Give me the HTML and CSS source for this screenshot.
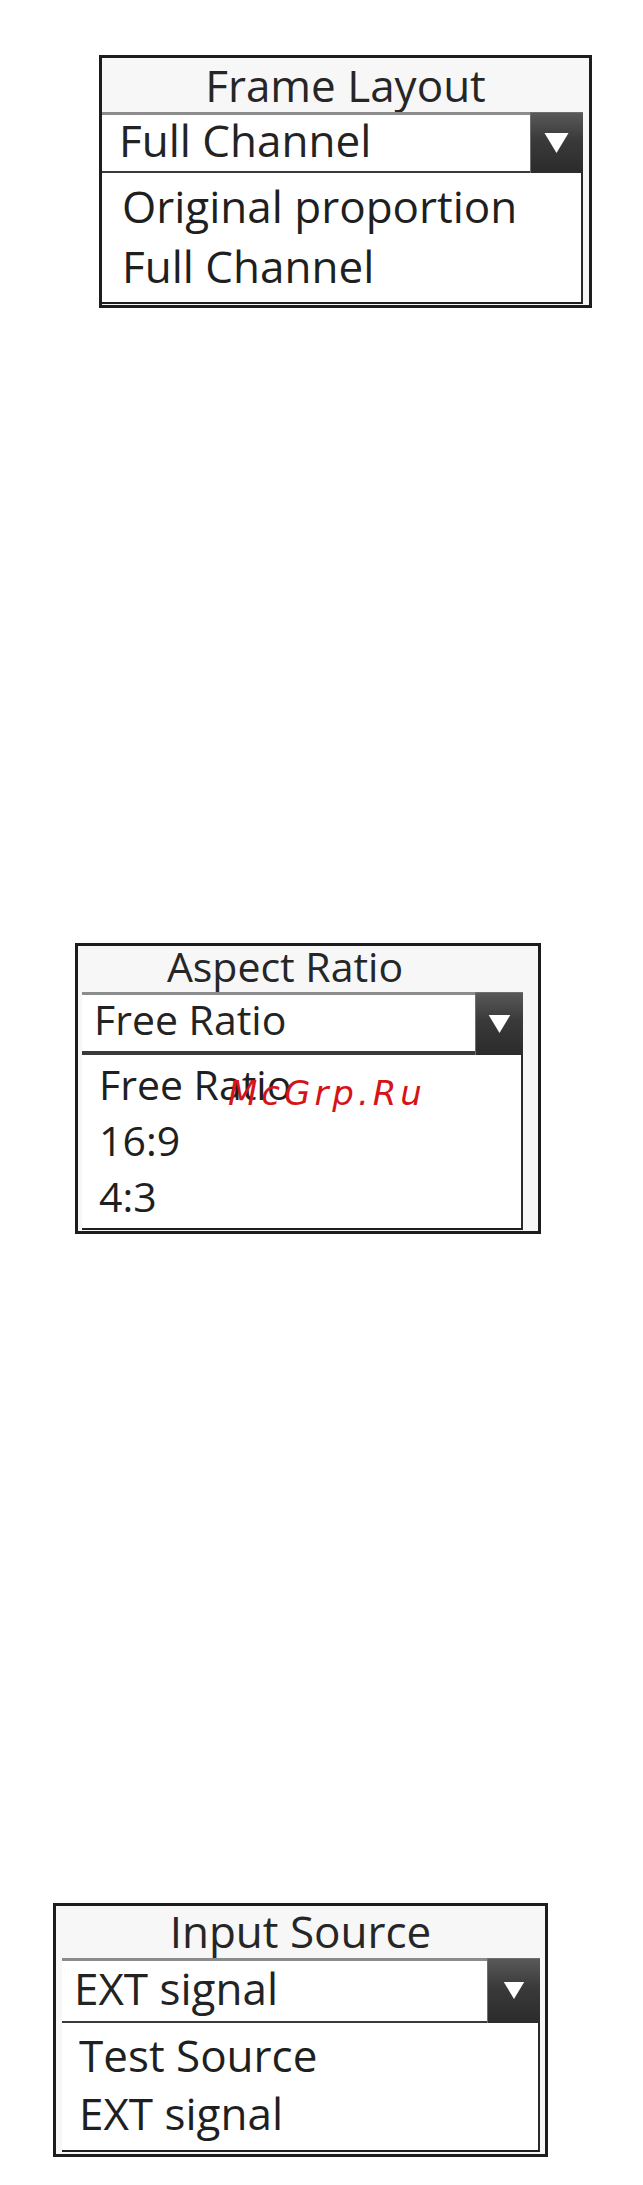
FILE: index.html
```html
<!DOCTYPE html>
<html>
<head>
<meta charset="utf-8">
<link rel="stylesheet" href="styles.css">
</head>
<body>
<div class="page">

  <div class="panel panel-frame">
    <div class="title">Frame Layout</div>
    <div class="combo">
      <div class="select">
        <div class="value">Full Channel</div>
        <div class="btn"><svg viewBox="0 0 24 20" class="arrow"><polygon points="0,0 24,0 12,20" fill="#fff"/></svg></div>
      </div>
      <div class="list">
        <div class="item">Original proportion</div>
        <div class="item">Full Channel</div>
      </div>
    </div>
  </div>

  <div class="panel panel-aspect">
    <div class="title">Aspect Ratio</div>
    <div class="combo">
      <div class="select">
        <div class="value">Free Ratio</div>
        <div class="btn"><svg viewBox="0 0 24 20" class="arrow"><polygon points="0,0 24,0 12,20" fill="#fff"/></svg></div>
      </div>
      <div class="list">
        <div class="item">Free Ratio</div>
        <div class="item">16:9</div>
        <div class="item">4:3</div>
      </div>
    </div>
    <div class="watermark">McGrp.Ru</div>
  </div>

  <div class="panel panel-input">
    <div class="title">Input Source</div>
    <div class="combo">
      <div class="select">
        <div class="value">EXT signal</div>
        <div class="btn"><svg viewBox="0 0 24 20" class="arrow"><polygon points="0,0 24,0 12,20" fill="#fff"/></svg></div>
      </div>
      <div class="list">
        <div class="item">Test Source</div>
        <div class="item">EXT signal</div>
      </div>
    </div>
  </div>

</div>
</body>
</html>
```

FILE: styles.css
```css
html, body {
  margin: 0;
  padding: 0;
  background: #ffffff;
}

.page {
  display: flex;
  flex-direction: column;
  align-items: flex-start;
  font-family: "Open Sans", "Liberation Sans", sans-serif;
  color: #222222;
}

.panel {
  position: relative;
  box-sizing: border-box;
  border: 3px solid #1d1d1d;
  background: #f7f7f7;
  display: flex;
  flex-direction: column;
}

.title {
  text-align: center;
  color: #262626;
}

.select {
  display: flex;
  background: #ffffff;
}

.value {
  flex: 1;
  background: #ffffff;
  border-top: 3px solid #8c8c8c;
  border-bottom: 2px solid #3a3a3a;
  color: #232323;
  white-space: nowrap;
}

.btn {
  display: flex;
  align-items: center;
  justify-content: center;
  background: linear-gradient(#5a5a5a, #3a3a3a 45%, #2b2b2b);
  box-shadow: inset 1px 1px 0 #6e6e6e;
}

.arrow {
  display: block;
}

.list {
  background: #ffffff;
  border-right: 2px solid #2a2a2a;
  border-bottom: 2px solid #1e1e1e;
}

.item {
  white-space: nowrap;
  color: #1f1f1f;
}

/* Frame Layout */
.panel-frame {
  margin-top: 55px;
  margin-left: 99px;
  width: 493px;
  height: 253px;
}
.panel-frame .title {
  font-size: 44px;
  line-height: 54px;
  height: 54px;
}
.panel-frame .combo {
  margin-right: 6px;
}
.panel-frame .value {
  font-size: 44px;
  line-height: 50px;
  height: 56px;
  padding-left: 17px;
}
.panel-frame .btn {
  width: 53px;
  height: 61px;
}
.panel-frame .arrow {
  width: 25px;
  height: 20px;
}
.panel-frame .list {
  padding: 3px 0 6px 0;
}
.panel-frame .item {
  font-size: 44px;
  line-height: 60px;
  height: 60px;
  padding-left: 20px;
}

/* Aspect Ratio */
.panel-aspect {
  margin-top: 635px;
  margin-left: 75px;
  width: 466px;
  height: 291px;
}
.panel-aspect .title {
  font-size: 41px;
  line-height: 40px;
  height: 40px;
  padding-bottom: 6px;
  padding-right: 46px;
}
.panel-aspect .combo {
  margin-left: 4px;
  margin-right: 15px;
}
.panel-aspect .value {
  font-size: 41px;
  line-height: 48px;
  height: 56px;
  border-bottom-width: 4px;
  padding-left: 12px;
}
.panel-aspect .btn {
  width: 48px;
  height: 63px;
}
.panel-aspect .arrow {
  width: 23px;
  height: 18px;
}
.panel-aspect .list {
  padding: 1px 0 4px 0;
}
.panel-aspect .item {
  font-size: 41px;
  line-height: 56px;
  height: 56px;
  padding-left: 17px;
}

.watermark {
  position: absolute;
  left: 150px;
  top: 127px;
  font-family: "DejaVu Sans", sans-serif;
  font-style: italic;
  font-size: 34px;
  line-height: 40px;
  letter-spacing: 4px;
  color: #d51419;
  white-space: nowrap;
}

/* Input Source */
.panel-input {
  margin-top: 669px;
  margin-left: 53px;
  width: 495px;
  height: 254px;
}
.panel-input .title {
  font-size: 44px;
  line-height: 50px;
  height: 52px;
}
.panel-input .combo {
  margin-left: 6px;
  margin-right: 5px;
}
.panel-input .value {
  font-size: 44px;
  line-height: 54px;
  height: 60px;
  padding-left: 12px;
}
.panel-input .btn {
  width: 53px;
  height: 65px;
}
.panel-input .arrow {
  width: 22px;
  height: 17px;
}
.panel-input .list {
  padding: 3px 0 8px 0;
}
.panel-input .item {
  font-size: 44px;
  line-height: 58px;
  height: 58px;
  padding-left: 17px;
}
```
